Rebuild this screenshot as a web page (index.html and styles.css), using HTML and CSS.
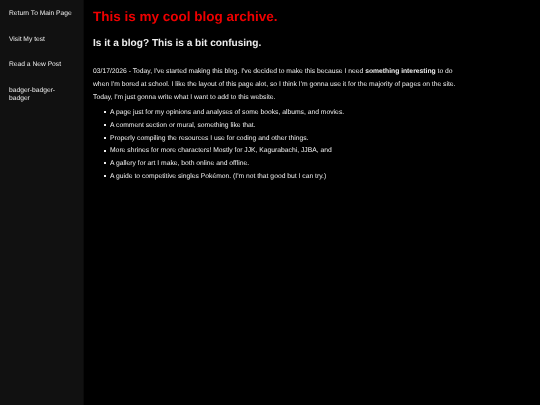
FILE: index.html
```html
<!DOCTYPE html>
<html>
<head>
<meta charset="utf-8">
<link rel="stylesheet" href="styles.css">
</head>
<body>
<div class="layout">
  <nav class="sidebar">
    <a class="nav-link" href="#">Return To Main Page</a>
    <a class="nav-link" href="#">Visit My test</a>
    <a class="nav-link" href="#">Read a New Post</a>
    <a class="nav-link" href="#">badger-badger-<br>badger</a>
  </nav>
  <main class="content">
    <h1 class="title">This is my cool blog archive.</h1>
    <h2 class="subtitle">Is it a blog? This is a bit confusing.</h2>
    <p class="post">03/17/2026 - Today, I've started making this blog. I've decided to make this because I need <b>something interesting</b> to do when I'm bored at school. I like the layout of this page alot, so I think I'm gonna use it for the majority of pages on the site. Today, I'm just gonna write what I want to add to this website.</p>
    <ul class="plans">
      <li>A page just for my opinions and analyses of some books, albums, and movies.</li>
      <li>A comment section or mural, something like that.</li>
      <li>Properly compiling the resources I use for coding and other things.</li>
      <li>More shrines for more characters! Mostly for JJK, Kagurabachi, JJBA, and</li>
      <li>A gallery for art I make, both online and offline.</li>
      <li>A guide to competitive singles Pokémon. (I'm not that good but I can try.)</li>
    </ul>
  </main>
</div>
</body>
</html>
```
FILE: styles.css
```css
html, body {
  margin: 0;
  padding: 0;
  background: #000;
  height: 100%;
}
body {
  font-family: "Liberation Sans", Arial, sans-serif;
  color: #eee;
  text-rendering: geometricPrecision;
}
.layout {
  display: flex;
  min-height: 405px;
  will-change: transform;
}
.sidebar {
  width: 84px;
  flex: none;
  background: #111;
  border-right: 1px solid #0b0b0b;
  display: flex;
  flex-direction: column;
  gap: 17.5px;
  padding: 10px 9px;
  box-sizing: border-box;
}
.nav-link {
  color: #eee;
  text-decoration: none;
  font-size: 6.7px;
  line-height: 8px;
}
.content {
  flex: 1;
  padding: 0 9px;
}
.title {
  color: #e00;
  font-size: 13.5px;
  margin: 9px 0 0;
  line-height: 16px;
}
.subtitle {
  font-size: 10.1px;
  margin: 13px 0 0;
  line-height: 12px;
}
.post {
  max-width: 372px;
  font-size: 6.75px;
  line-height: 13px;
  margin: 15px 0 0;
}
.plans {
  font-size: 6.75px;
  line-height: 12.8px;
  margin: 3px 0 0;
  padding-left: 17px;
  list-style: none;
}
.plans li::before {
  content: "";
  display: inline-block;
  width: 2px;
  height: 2px;
  background: #eee;
  margin: 0 4px 0 -6px;
  vertical-align: middle;
}
```
